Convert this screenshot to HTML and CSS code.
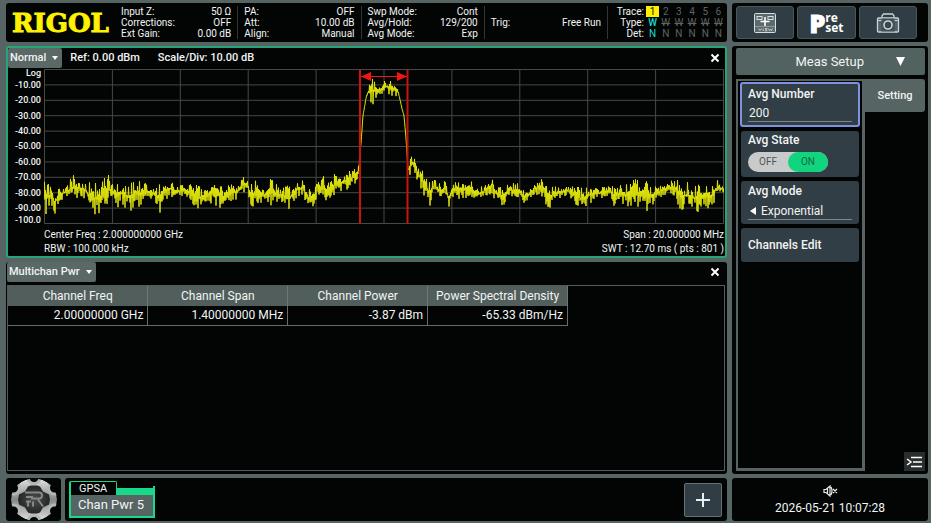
FILE: index.html
```html
<!DOCTYPE html>
<html lang="en">
<head>
<meta charset="utf-8">
<title>RIGOL Spectrum Analyzer</title>
<meta name="viewport" content="width=device-width, initial-scale=1">
<link rel="stylesheet" href="styles.css">
</head>
<body>
<main class="screen">
  <header class="status box">
    <div class="brand">RIGOL</div>
    <dl class="group">
      <div><dt>Input Z:</dt><dd>50 Ω</dd></div>
      <div><dt>Corrections:</dt><dd>OFF</dd></div>
      <div><dt>Ext Gain:</dt><dd>0.00 dB</dd></div>
    </dl>
    <dl class="group">
      <div><dt>PA:</dt><dd>OFF</dd></div>
      <div><dt>Att:</dt><dd>10.00 dB</dd></div>
      <div><dt>Align:</dt><dd>Manual</dd></div>
    </dl>
    <dl class="group">
      <div><dt>Swp Mode:</dt><dd>Cont</dd></div>
      <div><dt>Avg/Hold:</dt><dd>129/200</dd></div>
      <div><dt>Avg Mode:</dt><dd>Exp</dd></div>
    </dl>
    <dl class="group">
      <div><dt>Trig:</dt><dd>Free Run</dd></div>
    </dl>
    <table class="traces">
      <tr><th>Trace:</th><td class="current">1</td><td>2</td><td>3</td><td>4</td><td>5</td><td>6</td></tr>
      <tr class="type"><th>Type:</th><td class="active">W</td><td>W</td><td>W</td><td>W</td><td>W</td><td>W</td></tr>
      <tr><th>Det:</th><td class="active">N</td><td>N</td><td>N</td><td>N</td><td>N</td><td>N</td></tr>
    </table>
  </header>

  <nav class="tools box">
    <button class="tool" aria-label="Add view">
      <svg width="22" height="20" viewBox="0 0 22 20" fill="none" stroke="#d5dfdf">
        <rect x=".5" y=".5" width="21" height="19" rx="1" fill="#5c6a6e"/>
        <rect x="3" y="3.500" width="5" height="3"/><rect x="14" y="3.500" width="5" height="3"/>
        <path d="M11 4v9M6.500 8.500h9" stroke="#fff" stroke-width="1.600"/>
        <path d="M1 13.500h20" stroke="#8b989a"/>
        <path d="M4.500 15.500l1.500 2 1.500-2M9.200 15.500v2.500M11 15.500h2.500M11 16.700h2M11 17.800h2.500M14.500 15.500l1 2.200 1-1.500 1 1.500 1-2.200" stroke-width=".8"/>
      </svg>
    </button>
    <button class="tool preset" aria-label="Preset"><b>P</b><span>re<br>set</span></button>
    <button class="tool" aria-label="Screenshot">
      <svg width="24" height="20" viewBox="0 0 24 20" fill="none" stroke="#c9d4d5" stroke-width="1.300">
        <path d="M6 5V2.800L7.500 1h9L18 2.800V5"/>
        <rect x="1.500" y="5" width="21" height="14" rx="1" fill="#526167"/>
        <path d="M2 7.500h4M18 7.500h4" stroke-width="1"/>
        <rect x="5.500" y="5.500" width="13" height="13" fill="#414e54" stroke="none"/>
        <circle cx="12" cy="12" r="4" fill="#38454b" stroke-width="1.600"/>
      </svg>
    </button>
  </nav>

  <section class="spectrum box">
    <div class="titlebar">
      <button class="drop">Normal <i class="caret"></i></button>
      <span>Ref: 0.00 dBm</span><span class="scale">Scale/Div: 10.00 dB</span>
      <button class="close" aria-label="Close"><svg width="10" height="10" viewBox="0 0 10 10" stroke="#fff" stroke-width="2"><path d="M1.500 1.500l7 7M8.500 1.500l-7 7"/></svg></button>
    </div>
    <div class="chart">
      <div class="axis">
        <span>Log</span><span>-10.00</span><span>-20.00</span><span>-30.00</span><span>-40.00</span><span>-50.00</span><span>-60.00</span><span>-70.00</span><span>-80.00</span><span>-90.00</span><span>-100.0</span>
      </div>
      <div class="plot"><svg id="plot" viewBox="44 69 680 155" preserveAspectRatio="none" role="img" aria-label="Spectrum trace"></svg></div>
    </div>
    <div class="readout">
      <span>Center Freq : 2.000000000 GHz</span><span>Span : 20.000000 MHz</span>
      <span>RBW : 100.000 kHz</span><span>SWT : 12.70 ms ( pts : 801 )</span>
    </div>
  </section>

  <section class="results box">
    <div class="titlebar">
      <button class="drop">Multichan Pwr <i class="caret"></i></button>
      <button class="close" aria-label="Close"><svg width="10" height="10" viewBox="0 0 10 10" stroke="#fff" stroke-width="2"><path d="M1.500 1.500l7 7M8.500 1.500l-7 7"/></svg></button>
    </div>
    <div class="frame">
      <table class="channels">
        <thead><tr><th>Channel Freq</th><th>Channel Span</th><th>Channel Power</th><th>Power Spectral Density</th></tr></thead>
        <tbody><tr><td>2.00000000 GHz</td><td>1.40000000 MHz</td><td>-3.87 dBm</td><td>-65.33 dBm/Hz</td></tr></tbody>
      </table>
    </div>
  </section>

  <aside class="side box">
    <button class="menu-title"><span>Meas Setup</span><svg width="9" height="9" viewBox="0 0 9 9" fill="#fff"><path d="M0 0h9L4.500 9z"/></svg></button>
    <div class="menu">
      <div class="items">
        <div class="item number"><label for="avg">Avg Number</label><input id="avg" type="text" value="200"></div>
        <div class="item state"><span>Avg State</span>
          <button class="switch" role="switch" aria-checked="true" aria-label="Avg State"><span>OFF</span><span class="on">ON</span></button></div>
        <button class="item mode"><span>Avg Mode</span>
          <span class="value"><svg width="6" height="8" viewBox="0 0 6 8" fill="#fff"><path d="M6 0v8L0 4z"/></svg>Exponential</span></button>
        <button class="item edit">Channels Edit</button>
      </div>
      <div class="tabs">
        <button class="tab">Setting</button>
        <button class="collapse" aria-label="Collapse menu"><svg width="17" height="12" viewBox="0 0 17 12" fill="none" stroke="#fff" stroke-width="1.500"><path d="M1 3l4 3-4 3M5 1.500h11M7 6h9M5 10.500h11"/></svg></button>
      </div>
    </div>
  </aside>

  <footer class="bottom">
    <button class="launcher box" aria-label="System menu">
      <svg width="48" height="43" viewBox="-24 -21.500 48 43">
        <defs>
          <linearGradient id="metal" x1="0" y1="0" x2="0" y2="1"><stop offset="0" stop-color="#e2e4e3"/><stop offset=".5" stop-color="#858887"/><stop offset="1" stop-color="#dddfde"/></linearGradient>
          <radialGradient id="hub"><stop offset="0" stop-color="#4d4e4e"/><stop offset="1" stop-color="#242626"/></radialGradient>
        </defs>
        <ellipse rx="23" ry="21" fill="url(#metal)"/>
        <g fill="#030504" stroke="#b4b7b6" stroke-width="3">
          <circle cx="0" cy="-22" r="6"/><circle cx="0" cy="22" r="6"/>
          <circle cx="-20.500" cy="-11.500" r="6"/><circle cx="20.500" cy="-11.500" r="6"/>
          <circle cx="-20.500" cy="11.500" r="6"/><circle cx="20.500" cy="11.500" r="6"/>
        </g>
        <g fill="#030504">
          <path d="M-24-21.500h48v43h-48zM23 0A23 21 0 1 0-23 0A23 21 0 1 0 23 0z" fill-rule="evenodd"/>
        </g>
        <path d="M-16 0L-15-5L-9-8L-6-13L-3-14H3L6-13L9-8L15-5L16 0L15 5L9 8L6 13L3 14H-3L-6 13L-9 8L-15 5z" fill="url(#hub)"/>
        <path d="M-9-7H5q3 0 3 3t-3 3H-3M-8-2.500h7M-8 2h5M-6 7V2M-1 2v5M4 0l5 7" fill="none" stroke="#858887" stroke-width="2"/>
      </svg>
    </button>
    <div class="taskbar box">
      <button class="task"><span class="app">GPSA</span><span class="name">Chan Pwr 5</span></button>
      <button class="add" aria-label="Add"><svg width="14" height="14" viewBox="0 0 14 14" stroke="#e6eeee" stroke-width="2"><path d="M7 0v14M0 7h14"/></svg></button>
    </div>
  </footer>

  <div class="clock box">
    <svg width="15" height="12" viewBox="0 0 15 12" fill="none" stroke="#e8eeee" stroke-width="1.200"><path d="M1 4.500h2l4-3.500v10L3 7.500H1zM4.500 3v6M8 2q2 4 0 8M10 4l4 4M14 4l-4 4"/></svg>
    <time datetime="2026-05-21T10:07:28">2026-05-21 10:07:28</time>
  </div>
</main>
<script src="trace.js"></script>
</body>
</html>
```
FILE: styles.css
```css
* { box-sizing: border-box; }
body { margin: 0; background: #566563; color: #f1f4f4; font: 11px/14px Roboto, sans-serif; }
button, input { font: inherit; color: inherit; border: 0; padding: 0; margin: 0; background: none; }
button { cursor: pointer; }
dl, dd { margin: 0; }
svg { display: block; }

.screen { height: 100vh; min-height: 480px; padding: 3px 3px 2px 6px; display: grid; grid-template-columns: minmax(0, 1fr) 196px; grid-template-rows: 39px minmax(0, 1fr) minmax(0, 1fr) 43px; gap: 4px; column-gap: 5px; }
.box { background: #030504; border-radius: 3px; min-width: 0; }

.status { display: flex; align-items: center; padding: 0 0 0 6px; font-size: 10px; }
.brand { flex: 0 0 103px; font: bold 26px/32px "DejaVu Serif", serif; color: #fff200; -webkit-text-stroke: 1px #fff200; }
.group { flex: 1; height: 33px; padding: 0 6px; border-right: 1px solid #303635; display: flex; flex-direction: column; justify-content: space-around; line-height: 11px; }
.group div { display: flex; justify-content: space-between; }
.traces { width: 117px; margin-right: 2px; border-collapse: collapse; table-layout: fixed; line-height: 11px; color: #5e6463; text-align: center; }
.traces th { width: 38px; padding: 0 2px 0 0; font-weight: 400; text-align: right; color: #f1f4f4; }
.traces td { padding: 0; }
.traces .current { background: #fff000; color: #111; }
.traces .active { color: #19dfd0; }
.type td { text-decoration: line-through; }
.type .active { text-decoration: none; font-weight: 500; }

.tools { display: flex; gap: 3px; padding: 3px 11px 3px 4px; }
.tool { flex: 1; display: flex; align-items: center; justify-content: center; border: 1px solid #4a5759; border-radius: 3px; background: #303d44; }
.preset { font: bold 12px/10px "Open Sans", sans-serif; text-align: left; color: #fff; }
.preset b { font-size: 25px; line-height: 28px; font-weight: 800; -webkit-text-stroke: 1px #fff; }

.titlebar { display: flex; align-items: flex-start; font-weight: 500; line-height: 20px; }
.drop { display: flex; align-items: center; gap: 6px; height: 20px; padding: 0 4px 0 2px; border-radius: 2px; background: #5a6866; font-weight: 500; }
.caret { border: 3px solid transparent; border-top: 4px solid #fff; border-bottom: 0; }
.close { margin-left: auto; padding: 5px; }
.spectrum { border: 2px solid #25a578; display: flex; flex-direction: column; padding-right: 1px; }
.spectrum .titlebar { height: 21px; }
.spectrum .titlebar > span { margin-left: 8px; }
.spectrum .titlebar > .scale { margin-left: 18px; }
.spectrum .close { padding: 5px 4px; }
.chart { flex: 1; display: flex; min-height: 0; }
.axis { width: 36px; padding-right: 3px; display: grid; grid-template-rows: 8px repeat(9, minmax(0, 1fr)) 8px; align-items: center; text-align: right; font-size: 9px; line-height: 8px; font-weight: 500; }
.plot { flex: 1; min-width: 0; display: grid; grid-template-rows: minmax(0, 1fr); }
.plot svg { width: 100%; height: 100%; min-height: 0; }
.plot path { vector-effect: non-scaling-stroke; fill: none; stroke-width: 1; }
.plot .grid { stroke: #454948; }
.plot .marker { stroke: #c9140c; stroke-width: 2; }
.plot .band { stroke: #f4160d; }
.plot .arrow { fill: #f4160d; }
.plot .trace { stroke: #dfe30c; stroke-linejoin: round; }
.readout { display: grid; grid-template-columns: 1fr 1fr; padding: 4px 0 0 36px; font-size: 10px; }
.readout span:nth-child(even) { text-align: right; }

.results { display: flex; flex-direction: column; padding: 0 2px 3px 1px; }
.frame { flex: 1; border: 1px solid #555b5a; margin-top: 3px; font-size: 12px; }
.channels { width: 560px; max-width: 100%; border-collapse: collapse; table-layout: fixed; }
.channels th, .channels td { border: 1px solid #666c6b; padding: 2px 4px 3px; }
.channels tr > :first-child { border-left: 0; }
.channels thead th { border-top: 0; border-bottom: 0; border-color: #6d7876; padding: 3px 0; font-weight: 400; background: #525e5c; }
.channels td { text-align: right; border-top: 0; }

.side { grid-column: 2; grid-row: 2 / 4; padding: 2px 3px 3px 4px; display: flex; flex-direction: column; gap: 4px; }
.menu-title { height: 27px; border-radius: 2px; background: #526260; font-size: 13px; display: flex; align-items: center; justify-content: flex-end; gap: 32px; padding-right: 20px; }
.menu { flex: 1; display: flex; }
.items { width: 129px; border: 3px solid #566563; border-top-width: 2px; border-left-width: 2px; padding: 1px 2px 2px; display: flex; flex-direction: column; gap: 4px; }
.item { margin: 0 1px; border-radius: 3px; background: #323e45; padding: 2px 7px 0; text-align: left; display: flex; flex-direction: column; align-items: flex-start; font-size: 12px; font-weight: 500; }
.number { height: 45px; margin: 0; border: 2px solid #7d93e0; padding: 3px 6px 0; }
.number input { width: 100%; padding: 0 1px; margin-top: 3px; height: 18px; border-bottom: 1px solid #7b8789; font-weight: 400; outline: 0; }
.state { height: 46px; }
.switch { display: flex; margin-top: 5px; width: 80px; height: 20px; border-radius: 10px; background: #c9caca; color: #4f5656; font-size: 10px; font-weight: 400; }
.switch span { flex: 1; line-height: 20px; text-align: center; }
.switch .on { border-radius: 10px; background: #11d47e; color: #17663f; }
.mode { height: 43px; padding-top: 3px; }
.value { align-self: stretch; display: flex; align-items: center; gap: 5px; margin-top: 5px; height: 17px; padding-left: 2px; font-weight: 400; border-bottom: 1px solid #7b8789; }
.edit { height: 34px; padding-top: 0; justify-content: center; }
.tabs { flex: 1; display: flex; flex-direction: column; justify-content: space-between; align-items: flex-end; }
.tab { align-self: stretch; height: 33px; border-radius: 0 3px 3px 0; background: #566563; font-weight: 500; }
.collapse { width: 21px; height: 19px; background: #292e2e; display: grid; place-items: center; }

.bottom { display: flex; gap: 4px; min-width: 0; }
.launcher { width: 55px; display: grid; place-items: center; }
.taskbar { flex: 1; display: flex; justify-content: space-between; align-items: center; padding: 0 5px 0 4px; }
.task { width: 86px; height: 37px; border: 2px solid #18d88a; border-top: 0; border-radius: 3px; background: linear-gradient(#030504 7px, #18d88a 7px, #18d88a 14px, #566563 14px) border-box; border-image: linear-gradient(#030504 7px, #18d88a 7px) 2; display: flex; flex-direction: column; align-items: flex-start; }
.app { width: 48px; height: 14px; margin-left: -2px; padding-left: 8px; border: 1px solid #18d88a; border-left-width: 2px; border-bottom: 0; border-radius: 2px 2px 0 0; background: #030504; font-size: 11px; line-height: 13px; text-align: left; }
.name { padding-left: 7px; font-size: 13px; line-height: 20px; }
.add { width: 38px; height: 34px; border: 1px solid #647275; border-radius: 2px; background: #303d44; display: grid; place-items: center; }
.clock { display: flex; flex-direction: column; align-items: center; justify-content: center; gap: 4px; font-size: 12px; line-height: 14px; }
```
FILE: trace.js
```js
// Envelope of the trace: x, highest y and lowest y.
const envelope = [
  [44,185,213],[47,190,207],[51,189,203],[55,196,211],[60,190,199],[66,189,197],[73,180,197],[80,184,194],[85,185,196],
  [91,188,214],[96,190,209],[100,190,209],[107,180,203],[112,184,198],[117,188,206],[122,188,201],[130,188,210],[135,186,199],
  [140,186,204],[147,187,197],[155,190,201],[160,189,209],[165,186,197],[170,184,195],[177,189,196],[184,185,195],[190,187,200],
  [196,190,206],[205,193,203],[210,188,200],[217,187,203],[224,190,208],[230,188,199],[238,186,197],[243,180,190],[248,182,190],
  [251,188,207],[258,182,200],[264,190,203],[272,183,204],[280,189,203],[290,189,209],[296,186,196],[303,183,193],[308,193,204],
  [315,192,205],[317,184,190],[322,180,200],[330,186,196],[335,178,192],[345,177,188],[352,173,184],[358,168,180],[359,163,170],
  [361,143,144],[363,115,116],[366,98,99],[368,90,94],[370,84,98],[372,83,102],[376,86,98],[380,86,95],[385,82,92],[390,83,94],
  [395,86,96],[398,90,95],[400,99,100],[402,108,109],[404,115,116],[406,138,139],[408,167,173],[410,162,174],[413,158,169],
  [418,170,180],[424,176,192],[430,188,202],[434,182,190],[440,187,196],[445,183,195],[449,193,205],[453,185,195],[460,184,198],
  [467,184,195],[475,187,200],[480,189,200],[486,187,194],[492,181,192],[498,190,203],[505,190,203],[510,186,195],[520,187,198],
  [525,195,202],[535,185,193],[543,182,195],[549,190,207],[558,189,198],[568,188,193],[575,190,201],[582,192,210],[590,190,201],
  [600,190,197],[610,187,195],[614,190,203],[620,188,200],[630,188,206],[638,184,206],[648,189,208],[658,190,196],[665,184,195],
  [675,182,194],[680,188,206],[690,188,206],[695,190,210],[702,188,208],[712,189,204],[718,183,192],[724,188,192]
];

let seed = 20260521;
function random() {
  seed = (seed * 1664525 + 1013904223) >>> 0;
  return seed / 4294967296;
}

// Alternates between the upper and lower part of the envelope, with an
// occasional spike beyond either edge.
function tracePath() {
  const points = [];
  let k = 0;
  for (let i = 0; i <= 1360; i++) {
    const x = 44 + i / 2;
    while (k < envelope.length - 2 && envelope[k + 1][0] < x) k++;
    const [x0, h0, l0] = envelope[k];
    const [x1, h1, l1] = envelope[k + 1];
    const t = (x - x0) / (x1 - x0);
    const high = h0 + (h1 - h0) * t;
    const low = l0 + (l1 - l0) * t;
    const swing = i % 2 ? 0.4 - 0.75 * Math.pow(random(), 1.5) : 0.45 + 0.8 * Math.pow(random(), 1.6);
    points.push(x + " " + (high + (low - high) * swing).toFixed(1));
  }
  return "M" + points.join("L");
}

function gridPath() {
  let d = "";
  for (let i = 0; i <= 10; i++) {
    d += `M${44.5 + i * 67.9} 69.5V223.500`;
    d += `M44.5 ${69.5 + i * 15.4}H723.500`;
  }
  return d;
}

document.getElementById("plot").innerHTML =
  `<path class="grid" d="${gridPath()}"/>` +
  `<path class="trace" d="${tracePath()}"/>` +
  `<path class="marker" d="M360 69.5V223.500"/>` +
  `<path class="marker" d="M407.500 69.5V223.500"/>` +
  `<path class="band" d="M361 76.5H407"/>` +
  `<path class="arrow" d="M361 76.5L371 72V81zM407 76.5L397 72V81z"/>`;
```
